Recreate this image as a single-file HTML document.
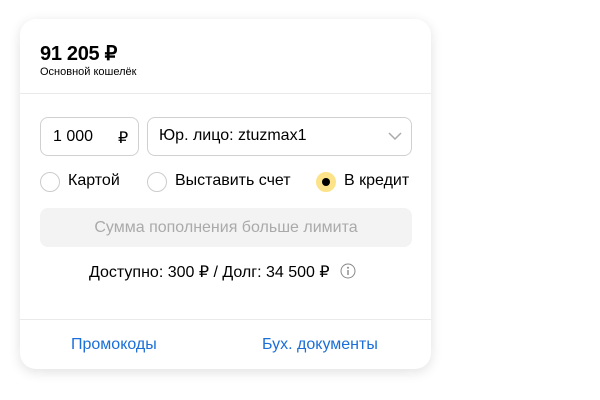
<!DOCTYPE html><html><head><meta charset="utf-8"><style>
*{box-sizing:border-box;margin:0;padding:0}
body{width:600px;height:400px;background:#fff;font-family:"Liberation Sans",sans-serif;color:#000;position:relative;overflow:hidden}
.card{position:absolute;left:20px;top:19px;width:411px;height:350px;border-radius:16px;background:#fff;box-shadow:0 3px 12px rgba(0,0,0,.12)}
.a{position:absolute}
.box{position:absolute;border:1px solid #d0d0d0;border-radius:8px;height:39px;top:98px}
.r{position:absolute;width:20px;height:20px;border-radius:50%;border:1px solid #ccc;top:153px}
.t{position:absolute;font-size:16px;top:153px}
</style></head><body><div class="card">
<div class="a" style="left:20px;top:22px;font-size:20px;font-weight:bold;letter-spacing:-.3px">91 205 ₽</div>
<div class="a" style="left:20px;top:47px;font-size:11px">Основной кошелёк</div>
<div class="a" style="left:0;right:0;top:74px;height:1px;background:#eaeaea"></div>
<div class="box" style="left:20px;width:99px"><span class="a" style="left:12px;top:10px;font-size:16px">1 000</span><span class="a" style="left:77px;top:10px;font-size:16px">₽</span></div>
<div class="box" style="left:127px;width:265px"><span class="a" style="left:11px;top:9px;font-size:16px">Юр. лицо: ztuzmax1</span>
<svg class="a" style="left:240px;top:14px" width="14" height="9" viewBox="0 0 14 9"><path d="M1 1l6 6 6-6" fill="none" stroke="#aaa" stroke-width="1.5"/></svg></div>
<div class="r" style="left:20px"></div><div class="t" style="left:48px">Картой</div>
<div class="r" style="left:127px"></div><div class="t" style="left:155px">Выставить счет</div>
<div class="r" style="left:296px;background:#fce38a;border-color:#fce38a"><div class="a" style="left:5px;top:5px;width:8px;height:8px;border-radius:50%;background:#000"></div></div><div class="t" style="left:324px">В кредит</div>
<div class="a" style="left:20px;top:189px;width:372px;height:39px;background:#f3f3f3;border-radius:8px;text-align:center;line-height:39px;font-size:16px;color:#aaa">Сумма пополнения больше лимита</div>
<div class="a" style="left:69px;top:243px;font-size:16px">Доступно: 300 ₽ / Долг: 34 500 ₽</div>
<svg class="a" style="left:320px;top:244px" width="16" height="16" viewBox="0 0 16 16"><circle cx="8" cy="8" r="7" fill="none" stroke="#888" stroke-width="1"/><circle cx="8" cy="4.8" r="1" fill="#888"/><path d="M8 7v5" stroke="#888" stroke-width="1.4"/></svg>
<div class="a" style="left:0;right:0;top:300px;height:1px;background:#eaeaea"></div>
<div class="a" style="left:51px;top:317px;font-size:16px;color:#1a6fd8">Промокоды</div>
<div class="a" style="left:242px;top:317px;font-size:16px;color:#1a6fd8">Бух. документы</div>
</div></body></html>
